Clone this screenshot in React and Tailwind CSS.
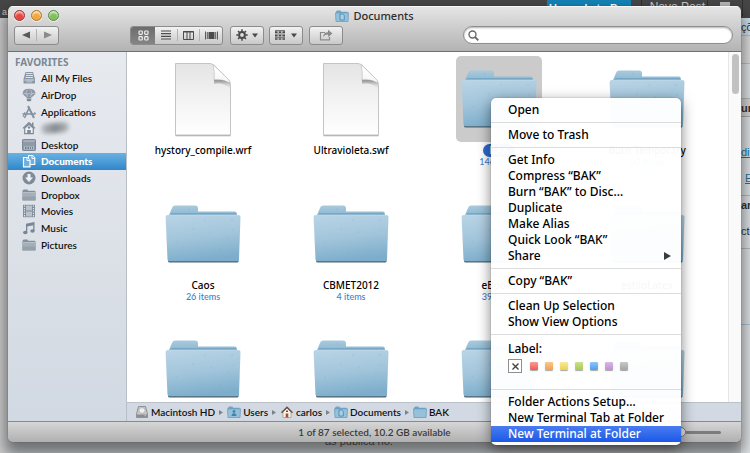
import React from "react";

const SANS = "font-['Noto_Sans','Open_Sans',sans-serif]";

function Folder({ id }) {
  return (
    <svg viewBox="0 0 76 58" className="h-[58px] w-[76px]" aria-hidden="true">
      <defs>
        <linearGradient id={`${id}-front`} x1="0.2" y1="0" x2="0.4" y2="1">
          <stop offset="0" stopColor="#b8d3e5" />
          <stop offset="0.5" stopColor="#a2c5db" />
          <stop offset="1" stopColor="#7cadcb" />
        </linearGradient>
        <linearGradient id={`${id}-back`} x1="0" y1="0" x2="0" y2="1">
          <stop offset="0" stopColor="#a9cadd" />
          <stop offset="1" stopColor="#82b1cd" />
        </linearGradient>
      </defs>
      <path d="M4 10 L7 3 Q7.500 0.500 10 0.500 H30 Q33 0.500 33 3.500 V6.500 H70 Q72 6.500 72 9 V14 H4 Z" fill={`url(#${id}-back)`} />
      <path d="M6 8.600 H71" stroke="#74a5c4" strokeWidth="1" />
      <path d="M3 55 H73.500 V56.500 Q73.500 57.500 72 57.500 H5 Q3 57.500 3 56 Z" fill="#4d6473" />
      <path d="M2.500 10 H73.500 Q75.600 10 75.500 12 L74 54.500 Q74 56.300 72 56.300 H4.500 Q2.600 56.300 2.500 54.500 L0.600 12.500 Q0.500 10 2.500 10 Z" fill={`url(#${id}-front)`} />
      <path d="M2 10.500 H74" stroke="#bdd7e7" strokeWidth="0.800" />
      <g fill="#6f9fbf" opacity="0.6">
        <circle cx="24" cy="4" r="0.500" /><circle cx="40" cy="15" r="0.500" /><circle cx="67" cy="15" r="0.600" />
        <circle cx="46" cy="27" r="0.500" /><circle cx="12" cy="37" r="0.500" /><circle cx="63" cy="33" r="0.500" />
        <circle cx="28" cy="24" r="0.500" /><circle cx="55" cy="45" r="0.500" /><circle cx="68" cy="25" r="0.500" />
        <circle cx="35" cy="48" r="0.500" />
      </g>
    </svg>
  );
}

function Page({ id }) {
  return (
    <svg viewBox="0 0 58 75" className="h-[75px] w-[58px]" aria-hidden="true">
      <defs>
        <linearGradient id={`${id}-sheet`} x1="0" y1="0" x2="0" y2="1">
          <stop offset="0" stopColor="#e4e4e4" />
          <stop offset="0.5" stopColor="#f3f3f3" />
          <stop offset="1" stopColor="#ffffff" />
        </linearGradient>
        <linearGradient id={`${id}-curl`} x1="0.500" y1="0.350" x2="0.300" y2="1">
          <stop offset="0" stopColor="#ffffff" />
          <stop offset="0.7" stopColor="#f6f6f6" />
          <stop offset="1" stopColor="#bdbdbd" />
        </linearGradient>
        <linearGradient id={`${id}-shade`} x1="0" y1="0" x2="0" y2="1">
          <stop offset="0" stopColor="#6f6f6f" />
          <stop offset="1" stopColor="#e0e0e0" stopOpacity="0" />
        </linearGradient>
      </defs>
      <path d="M1.500 73.500 H56.500" stroke="#a9a9a9" strokeWidth="1.500" />
      <path d="M1.500 1.500 H36 Q39 2 41 4 L54 17 Q56.500 19.500 56.500 24 V73 H1.500 Z" fill={`url(#${id}-sheet)`} stroke="#c4c4c4" />
      <path d="M40 17 Q49 16 56 21 V27 Q49 20 40 22 Z" fill={`url(#${id}-shade)`} />
      <path d="M39 2.500 L54 17 Q56 19 56 21 Q49 16.500 40 18 Q41 9 39 2.500 Z" fill={`url(#${id}-curl)`} stroke="#b0b0b0" strokeWidth="0.500" />
    </svg>
  );
}

const glyphs = {
  files: (
    <g>
      <path d="M3.500 1 H11 L13 8 V12.500 H1.500 V8 Z" fill="#8b97a4" />
      <path d="M4 2.500 H10.500 M4 4.500 H11 M3.500 6.500 H11" stroke="#e6ebf0" strokeWidth="0.900" />
      <path d="M2.500 9 H12" stroke="#e6ebf0" strokeWidth="0.900" />
      <path d="M4.500 10.800 H10" stroke="#d0d7de" strokeWidth="0.800" />
    </g>
  ),
  airdrop: (
    <g>
      <path d="M0.500 6 Q0.500 0.700 7 0.700 Q13.500 0.700 13.500 6 L9.500 9.500 H4.500 Z" fill="#8b97a4" />
      <path d="M1 6 Q3 4.500 4.500 6.300 Q7 4.500 9.500 6.300 Q11 4.500 13 6 M4.500 6.300 L6 9 M9.500 6.300 L8 9 M4 6 Q4 3 6 1.500 M10 6 Q10 3 8 1.500" stroke="#e2e7ed" strokeWidth="0.500" fill="none" />
      <rect x="4.800" y="9" width="4.400" height="4.300" rx="1" fill="#7d8995" />
      <path d="M5 10.500 H9" stroke="#d5dbe2" strokeWidth="0.600" />
    </g>
  ),
  apps: (
    <g stroke="#84909c" fill="none">
      <path d="M2.500 13 L7.500 2" strokeWidth="1.600" />
      <path d="M6 1 L12 13" strokeWidth="2" />
      <path d="M0.500 9 H13.500" strokeWidth="1.500" />
      <path d="M1 12 L3 7 M12.500 7 L13.500 9" strokeWidth="1" />
    </g>
  ),
  home: (
    <g>
      <path d="M7 0.800 L0.500 7 L1.500 7.800 L7 2.800 L12.500 7.800 L13.500 7 L11.500 5 V1.500 H10 V3.500 Z" fill="#7e8a97" />
      <path d="M2.700 7 V12.700 H11.300 V7 L7 3.200 Z" fill="#eef1f4" stroke="#7e8a97" strokeWidth="1.200" />
      <path d="M5.200 13 V9 H8.800 V13 Z" fill="#7e8a97" />
      <circle cx="7" cy="6.500" r="1.200" fill="#7e8a97" />
    </g>
  ),
  desktop: (
    <g>
      <rect x="0.500" y="1.500" width="13" height="11" rx="0.800" fill="#8e9aa7" stroke="#7d8995" />
      <path d="M1.500 3 H12.500" stroke="#bcc5ce" />
      <rect x="2" y="8.500" width="10" height="3" fill="#b6c0ca" />
      <path d="M3 10 H4.500 M5.500 10 H7 M8 10 H9 M10 10 H11" stroke="#5f6c79" strokeWidth="1.500" />
    </g>
  ),
  documents: (
    <g stroke="#ffffff" fill="#6bb0e0">
      <path d="M6.500 1.500 H10.500 L12.800 4 V10.500 H6.500 Z" strokeWidth="1.100" />
      <path d="M10 1.500 V4.500 H13" strokeWidth="0.900" />
      <path d="M1.500 3.500 H5 L8 6.500 V12.800 H1.500 Z" strokeWidth="1.200" />
      <path d="M5 3.500 V6.500 H8" strokeWidth="0.900" />
    </g>
  ),
  downloads: (
    <g>
      <circle cx="7" cy="7" r="6.500" fill="#7f8b98" />
      <path d="M5.500 3 H8.500 V6.500 H11 L7 11 L3 6.500 H5.500 Z" fill="#eef1f4" />
    </g>
  ),
  folder: (
    <g>
      <path d="M0.500 3 Q0.500 1.500 2 1.500 H5 Q6 1.500 6 2.700 H12.500 Q13.500 2.700 13.500 4 V12 H0.500 Z" fill="#84909c" />
      <path d="M0.500 4.500 H13.500 V12.500 H0.500 Z" fill="#a5afb9" />
      <path d="M0.500 8.500 H13.500 V12.500 H0.500 Z" fill="#96a1ac" />
      <path d="M1 4.500 H13" stroke="#c4cbd2" strokeWidth="0.700" />
    </g>
  ),
  movies: (
    <g>
      <rect x="1" y="0.800" width="12" height="12.400" fill="#7f8b98" />
      <rect x="4" y="1.500" width="6" height="5" fill="#b9c2cb" />
      <rect x="4" y="7.500" width="6" height="5" fill="#b9c2cb" />
      <path d="M2.500 1.500 V13 M11.500 1.500 V13" stroke="#e4e9ee" strokeWidth="1.200" strokeDasharray="1.300 1.100" />
    </g>
  ),
  music: (
    <g fill="#7a8693">
      <path d="M4 2.800 L12.500 1 V10 H11.200 V4.200 L5.300 5.400 V11.500 H4 Z" />
      <ellipse cx="3.300" cy="11.500" rx="2.200" ry="1.700" />
      <ellipse cx="10.500" cy="10" rx="2.200" ry="1.700" />
    </g>
  ),
};

function SideGlyph({ name }) {
  return (
    <svg viewBox="0 0 14 14" className="h-3.5 w-3.5 shrink-0" aria-hidden="true">
      {glyphs[name]}
    </svg>
  );
}

const places = [
  { icon: "files", label: "All My Files" },
  { icon: "airdrop", label: "AirDrop" },
  { icon: "apps", label: "Applications" },
  { icon: "home", label: "" },
  { icon: "desktop", label: "Desktop" },
  { icon: "documents", label: "Documents", current: true },
  { icon: "downloads", label: "Downloads" },
  { icon: "folder", label: "Dropbox" },
  { icon: "movies", label: "Movies" },
  { icon: "music", label: "Music" },
  { icon: "folder", label: "Pictures" },
];

function Sidebar() {
  return (
    <nav className="w-[119px] shrink-0 border-r border-[#b9bec4] bg-linear-to-b from-[#e7ebf0] via-[#dde1e8] to-[#d1d9e2] pt-[3px]">
      <h2 className="pl-[7px] text-[10px] leading-[15px] font-bold text-[#7b8794]">FAVORITES</h2>
      <ul className="grid h-[183px] auto-rows-fr font-['Lato','Noto_Sans',sans-serif]">
        {places.map((p, i) => (
          <li key={i} className="min-h-0">
            <a
              href="#place"
              aria-label={p.label || "Home"}
              className={
                p.current
                  ? "flex h-full items-center gap-[5px] bg-linear-to-b from-[#68b2e2] to-[#2f86c9] pl-3.5 text-[10px] leading-none font-black text-white"
                  : "flex h-full items-center gap-[5px] pl-3.5 text-[10px] leading-none font-semibold text-[#111111]"
              }
            >
              <SideGlyph name={p.icon} />
              {p.label || <span className="h-2.5 w-7 -rotate-6 rounded-full bg-linear-to-r from-[#b9bec3] via-[#858a8e] to-[#b4b9be] blur-[2px]" />}
            </a>
          </li>
        ))}
      </ul>
    </nav>
  );
}

const BTN =
  "flex h-[19px] items-center justify-center rounded-[3px] border border-[#8c8c8c] bg-linear-to-b from-[#f2f2f2] to-[#c9c9c9]";

function Caret() {
  return (
    <svg viewBox="0 0 6 5" className="h-[5px] w-1.5" aria-hidden="true">
      <path d="M0 0.500 H6 L3 4.500 Z" fill="#4a4a4a" />
    </svg>
  );
}

function Toolbar() {
  return (
    <div className="flex h-5 items-center pr-2 pl-1.5">
      <div className={`${BTN} w-[45px]`}>
        <button aria-label="Back" className="flex h-full flex-1 items-center justify-center">
          <svg viewBox="0 0 8 8" className="h-2 w-2"><path d="M8 0.500 V7.500 L0 4 Z" fill="#5a5a5a" /></svg>
        </button>
        <span className="h-3 w-px bg-[#b3b3b3]" />
        <button aria-label="Forward" className="flex h-full flex-1 items-center justify-center">
          <svg viewBox="0 0 8 8" className="h-2 w-2"><path d="M0 0.500 V7.500 L8 4 Z" fill="#8b8b8b" /></svg>
        </button>
      </div>
      <div className={`${BTN} ml-[71px] w-[93px] overflow-hidden`}>
        <button aria-label="Icon view" aria-pressed="true" className="flex h-full w-6 items-center justify-center bg-linear-to-b from-[#6d6d6d] to-[#858585]">
          <svg viewBox="0 0 11 11" className="h-[11px] w-[11px]" fill="none" stroke="#f0f0f0" strokeWidth="1.200">
            <rect x="1" y="1" width="3.300" height="3.300" rx="0.800" /><rect x="6.700" y="1" width="3.300" height="3.300" rx="0.800" />
            <rect x="1" y="6.700" width="3.300" height="3.300" rx="0.800" /><rect x="6.700" y="6.700" width="3.300" height="3.300" rx="0.800" />
          </svg>
        </button>
        <button aria-label="List view" className="flex h-full flex-1 items-center justify-center">
          <svg viewBox="0 0 10 10" className="h-2.5 w-2.5"><path d="M0 1 H10 M0 3.700 H10 M0 6.400 H10 M0 9 H10" stroke="#4c4c4c" strokeWidth="1.200" /></svg>
        </button>
        <span className="h-3 w-px bg-[#b3b3b3]" />
        <button aria-label="Column view" className="flex h-full flex-1 items-center justify-center">
          <svg viewBox="0 0 11 9" className="h-[9px] w-[11px]"><path d="M0.500 0.500 H10.500 V8.500 H0.500 Z M4 1 V8 M7 1 V8 M0 1 H11" fill="none" stroke="#4c4c4c" /></svg>
        </button>
        <span className="h-3 w-px bg-[#b3b3b3]" />
        <button aria-label="Cover Flow view" className="flex h-full flex-1 items-center justify-center">
          <svg viewBox="0 0 13 9" className="h-[9px] w-[13px]">
            <rect x="3.500" y="1" width="6" height="7" fill="#4c4c4c" />
            <path d="M0.500 0.500 V8.500 M2.300 1 V8 M10.700 1 V8 M12.500 0.500 V8.500" stroke="#4c4c4c" strokeWidth="0.900" />
          </svg>
        </button>
      </div>
      <button aria-label="Actions" className={`${BTN} ml-[7px] w-[34px] gap-1`}>
        <svg viewBox="0 0 12 12" className="h-3 w-3">
          <circle cx="6" cy="6" r="2.900" fill="none" stroke="#4a4a4a" strokeWidth="2" />
          <path d="M6 0.300 V2.500 M6 9.500 V11.700 M0.300 6 H2.500 M9.500 6 H11.700 M2 2 L3.500 3.500 M8.500 8.500 L10 10 M10 2 L8.500 3.500 M3.500 8.500 L2 10" stroke="#4a4a4a" strokeWidth="1.500" />
        </svg>
        <Caret />
      </button>
      <button aria-label="Arrange" className={`${BTN} ml-[5px] w-[34px] gap-1.5`}>
        <svg viewBox="0 0 10 10" className="h-2.5 w-2.5" stroke="#4a4a4a">
          <path d="M0 0.500 H10 M0 4 H10 M0 7.400 H10" strokeWidth="0.700" />
          <path d="M0 2.200 H10 M0 5.600 H10 M0 9 H10" strokeWidth="1.700" strokeDasharray="2.600 1.100" />
        </svg>
        <Caret />
      </button>
      <button aria-label="Share" className={`${BTN} ml-1.5 w-[34px]`}>
        <svg viewBox="0 0 14 12" className="h-3 w-3.5" fill="none">
          <path d="M6 3.500 H1.500 V10.800 H10.500 V8" stroke="#8b8b8b" strokeWidth="1.200" />
          <path d="M4 8 Q4.500 3.300 9 3.300 V0.800 L13.500 4.500 L9 8 V5.600 Q6 5.500 4 8 Z" fill="#8b8b8b" />
        </svg>
      </button>
      <label className="ml-auto flex h-[18px] w-[270px] items-center rounded-full border border-[#8e8e8e] bg-white pl-1 shadow-[inset_0_1px_2px_rgba(0,0,0,0.3)]">
        <svg viewBox="0 0 11 11" className="h-[11px] w-[11px] shrink-0" fill="none" stroke="#6a6a6a">
          <circle cx="4.500" cy="4.500" r="3.500" strokeWidth="1.400" />
          <path d="M7 7 L10.300 10.300" strokeWidth="1.900" />
        </svg>
        <input type="search" aria-label="Search" className="min-w-0 flex-1 bg-transparent px-1 text-[11px] outline-none" />
      </label>
    </div>
  );
}

function MiniFolder({ mark }) {
  return (
    <svg viewBox="0 0 14 12" className="h-3 w-3.5 shrink-0" aria-hidden="true">
      <path d="M1 2 Q1 0.500 2.500 0.500 H5 Q6 0.500 6 1.800 H12.500 V4 H1 Z" fill="#6fa5c6" />
      <path d="M0.500 2.800 H13.500 L13 11.500 H1 Z" fill="#96c1da" stroke="#5f98bb" strokeWidth="0.700" />
      {mark === "doc" && <path d="M5 4 H7.800 L9.300 5.500 V10 H5 Z" fill="#a9cfe5" stroke="#4783a8" strokeWidth="0.800" />}
      {mark === "users" && (
        <g fill="#4783a8">
          <circle cx="7" cy="5.500" r="1.400" />
          <path d="M4.500 10 Q4.500 7.300 7 7.300 Q9.500 7.300 9.500 10 Z" />
        </g>
      )}
    </svg>
  );
}

function Light({ tone }) {
  return (
    <button
      aria-label={tone.name}
      className={`h-[11px] w-[11px] rounded-full border shadow-[inset_0_2px_2px_rgba(255,255,255,0.7),0_1px_0_rgba(255,255,255,0.5)] ${tone.style}`}
    />
  );
}

const lights = [
  { name: "Close", style: "border-[#9b3b36] bg-[#e9453f]" },
  { name: "Minimize", style: "border-[#a9772f] bg-[#f0a83e]" },
  { name: "Zoom", style: "border-[#5d8b48] bg-[#80bf5c]" },
];

const items = [
  { kind: "page", name: "hystory_compile.wrf" },
  { kind: "page", name: "Ultravioleta.swf" },
  { kind: "folder", name: "BAK", count: "146 items", selected: true },
  { kind: "folder", name: "Burn Temporary", count: "60 items" },
  { kind: "folder", name: "Caos", count: "26 items" },
  { kind: "folder", name: "CBMET2012", count: "4 items" },
  { kind: "folder", name: "eBooks", count: "39 items" },
  { kind: "folder", name: "estiloLatex" },
  { kind: "folder", name: "" },
  { kind: "folder", name: "" },
  { kind: "folder", name: "" },
  { kind: "folder", name: "" },
];

function Files() {
  return (
    <div className="flex min-h-0 flex-1 overflow-hidden bg-white">
      <div className="grid flex-1 auto-rows-[135px] grid-cols-4 pt-1 pr-[7px] pl-0.5">
        {items.map((it, i) => (
          <figure key={i} className="flex flex-col items-center">
            <div className={`flex h-[86px] w-[86px] items-center justify-center rounded-[5px] ${it.selected ? "bg-[#cbcbcb]" : ""}`}>
              {it.kind === "page" ? <Page id={`p${i}`} /> : <Folder id={`f${i}`} />}
            </div>
            <figcaption className="flex flex-col items-center pt-0.5 text-[10px] leading-[13px] font-medium text-black">
              <span className={it.selected ? "rounded-full bg-[#2f68d2] px-1.5 text-white" : ""}>{it.name}</span>
              {it.count && (
                <span className="font-['Lato','Noto_Sans',sans-serif] text-[9px] leading-[10px] text-[#3f7fc9]">{it.count}</span>
              )}
            </figcaption>
          </figure>
        ))}
      </div>
      <div className="w-[13px] border-l border-[#e6e6e6] bg-[#fafafa] pt-0.5">
        <div className="mx-auto h-10 w-[7px] rounded-full bg-[#c1c1c1]" />
      </div>
    </div>
  );
}

function Crumb({ icon, label, last }) {
  return (
    <li className="flex items-center">
      {icon}
      <a href="#crumb" className="ml-0.5">{label}</a>
      {!last && (
        <svg viewBox="0 0 4 5" className="mx-1 h-[5px] w-1" aria-hidden="true"><path d="M0 0 V5 L4 2.500 Z" fill="#7d838a" /></svg>
      )}
    </li>
  );
}

function PathBar() {
  return (
    <ol className="flex h-[19px] shrink-0 items-center border-t border-[#bcc2c9] bg-[#d2d9e2] pl-2 font-['Lato','Noto_Sans',sans-serif] text-[10px] leading-none font-semibold text-[#111111]">
      <Crumb
        label="Macintosh HD"
        icon={
          <svg viewBox="0 0 14 12" className="h-3 w-3.5" aria-hidden="true">
            <path d="M3.500 0.500 H10.500 L12.500 8 V11.500 H1.500 V8 Z" fill="#c9c9c9" stroke="#777777" strokeWidth="0.700" />
            <ellipse cx="7" cy="4.500" rx="3" ry="2.800" fill="#efefef" stroke="#a5a5a5" strokeWidth="0.600" />
            <rect x="2" y="8.500" width="10" height="2.500" fill="#8c8c8c" />
            <path d="M9.500 9.700 H11" stroke="#d8d070" />
          </svg>
        }
      />
      <Crumb label="Users" icon={<MiniFolder mark="users" />} />
      <Crumb
        label="carlos"
        icon={
          <svg viewBox="0 0 14 12" className="h-3 w-3.5" aria-hidden="true">
            <path d="M3 6 V11.500 H11 V6 L7 2 Z" fill="#f5f2ea" stroke="#8d877b" strokeWidth="0.600" />
            <path d="M1.500 6.800 L7 1.200 L12.500 6.800" fill="none" stroke="#6b5245" strokeWidth="1.500" />
            <rect x="5.700" y="7.500" width="2.600" height="4" fill="#b04a2c" />
            <rect x="6" y="4.500" width="2" height="1.500" fill="#7d4a35" />
          </svg>
        }
      />
      <Crumb label="Documents" icon={<MiniFolder mark="doc" />} />
      <Crumb label="BAK" last icon={<MiniFolder />} />
    </ol>
  );
}

const swatches = [
  { name: "Red", style: "from-[#f89a94] to-[#ee5a54]" },
  { name: "Orange", style: "from-[#fac68c] to-[#f2a04c]" },
  { name: "Yellow", style: "from-[#f7ea94] to-[#ead24c]" },
  { name: "Green", style: "from-[#cbe08c] to-[#a9cb50]" },
  { name: "Blue", style: "from-[#8cc6f8] to-[#4c9fee]" },
  { name: "Purple", style: "from-[#dab8e6] to-[#c08ed4]" },
  { name: "Gray", style: "from-[#c8c8c8] to-[#a4a4a4]" },
];

const menuGroups = [
  ["Open"],
  ["Move to Trash"],
  ["Get Info", "Compress “BAK”", "Burn “BAK” to Disc…", "Duplicate", "Make Alias", "Quick Look “BAK”", "Share"],
  ["Copy “BAK”"],
  ["Clean Up Selection", "Show View Options"],
];

function MenuItem({ label, active }) {
  return (
    <button
      role="menuitem"
      className={
        active
          ? "flex h-4 w-full items-center justify-between bg-linear-to-b from-[#4a7cf0] to-[#1a58e8] pr-2.5 pl-[17px] text-white"
          : "flex h-4 w-full items-center justify-between pr-2.5 pl-[17px]"
      }
    >
      {label}
      {label === "Share" && (
        <svg viewBox="0 0 7 8" className="h-2 w-[7px]" aria-hidden="true"><path d="M0 0 V8 L7 4 Z" fill="#3c3c3c" /></svg>
      )}
    </button>
  );
}

function Rule() {
  return <hr className="my-1 border-t border-[#dcdcdc]" />;
}

function ContextMenu() {
  return (
    <div
      role="menu"
      className="absolute top-[98px] left-[491px] w-[190px] rounded-[5px] bg-white/97 pt-1 pb-[3px] text-[12px] leading-4 font-medium text-black shadow-[0_4px_14px_rgba(0,0,0,0.5),0_0_1px_rgba(0,0,0,0.5)]"
    >
      {menuGroups.map((group, i) => (
        <React.Fragment key={i}>
          {group.map((label) => (
            <MenuItem key={label} label={label} />
          ))}
          <Rule />
        </React.Fragment>
      ))}
      <div className="pt-0.5 pl-[17px]">Label:</div>
      <div className="flex items-center gap-2 pt-0.5 pb-3 pl-[17px]">
        <button aria-label="No label" className="flex h-3.5 w-3.5 items-center justify-center border border-[#8f8f8f] bg-white">
          <svg viewBox="0 0 7 7" className="h-[7px] w-[7px]"><path d="M0.500 0.500 L6.500 6.500 M6.500 0.500 L0.500 6.500" stroke="#444444" strokeWidth="1.400" /></svg>
        </button>
        <div className="flex gap-[7px]">
          {swatches.map((s) => (
            <button key={s.name} aria-label={s.name} className={`h-2 w-2 rounded-[1px] bg-linear-to-b shadow-[0_1px_1px_rgba(0,0,0,0.35)] ${s.style}`} />
          ))}
        </div>
      </div>
      <Rule />
      <MenuItem label="Folder Actions Setup…" />
      <MenuItem label="New Terminal Tab at Folder" />
      <MenuItem label="New Terminal at Folder" active />
    </div>
  );
}

function Backdrop() {
  return (
    <div className="absolute inset-0 flex flex-col overflow-hidden bg-[#c9cdd0] font-['Liberation_Sans',Arial,sans-serif]" aria-hidden="true">
      <div className="flex h-[18px] shrink-0 items-start justify-end bg-[#464646] pr-[7px] text-[11px] leading-3 text-[#c8c8c8]">
        <span className="mr-auto ml-0.5 pt-1.5 text-[9px]">a.</span>
        <span className="h-4 w-[84px] bg-[#1483b5] pt-0.5 text-center font-bold text-white">Upgrade to Pro</span>
        <span className="mr-0.5 ml-2.5 h-4 border-l border-[#303030] pt-px pl-2 text-[12px]">Novo Post</span>
        <span className="h-4 border-x border-[#303030] px-3 pt-0.5"><i className="block h-3 w-[10px] bg-[#b5b5b5]" /></span>
      </div>
      <div className="flex flex-1">
        <div className="w-2 bg-[#cccccc]" />
        <div className="flex flex-1 items-end pb-0.5 pl-[317px] text-[11px] leading-[19px] text-[#555555]">as publica no.</div>
        <div className="flex w-[9px] flex-col overflow-hidden bg-[#dfe3e6] text-[11px] leading-[18px] text-[#333333]">
          <div className="h-[18px] shrink-0 border-b border-[#a9c4d6] bg-[#cfe1ec]">çõ</div>
          <div className="h-7 shrink-0 border-b border-[#b5c2cb] bg-[#dddddd]" />
          <div className="h-[35px] shrink-0 border-b border-[#b9b9b9]" />
          <div className="h-[18px] shrink-0 border-b border-[#a8a8a8] bg-[#d5d5d5] font-bold">um</div>
          <div className="h-[26px] shrink-0" />
          <div className="h-[26px] shrink-0 text-[#21759b] underline">dit</div>
          <div className="h-[26px] shrink-0 pl-1 text-[#21759b] underline">E</div>
          <div className="h-[27px] shrink-0 border-t border-[#b9b9b9] font-bold">am</div>
          <div className="h-[27px] shrink-0 border-b border-[#b9b9b9]">cte</div>
          <div className="h-[76px] shrink-0 border-b border-[#a9c4d6]" />
          <div className="flex-1" />
        </div>
      </div>
    </div>
  );
}

export default function App() {
  return (
    <div className={`relative flex h-screen flex-col overflow-hidden pt-1.5 pr-[9px] pb-[11px] pl-2 ${SANS}`}>
      <Backdrop />
      <main className="relative flex min-h-0 flex-1 flex-col overflow-hidden rounded-[5px] shadow-[0_9px_14px_3px_rgba(0,0,0,0.45),0_0_1px_rgba(0,0,0,0.7)]">
        <header className="h-[46px] shrink-0 border-b border-[#6f6f6f] bg-linear-to-b from-[#e6e6e6] to-[#b3b3b3] shadow-[inset_0_1px_0_rgba(255,255,255,0.7)]">
          <div className="flex h-[19px] items-center px-1.5">
            <div className="flex flex-1 gap-1.5">
              {lights.map((l) => (
                <Light key={l.name} tone={l} />
              ))}
            </div>
            <h1 className="flex items-center gap-1 text-[11px] leading-none font-medium text-[#2d2d2d]">
              <MiniFolder mark="doc" />
              Documents
            </h1>
            <div className="flex-1" />
          </div>
          <Toolbar />
        </header>
        <div className="flex min-h-0 flex-1">
          <Sidebar />
          <div className="flex min-w-0 flex-1 flex-col">
            <Files />
            <PathBar />
          </div>
        </div>
        <footer className="grid h-[21px] shrink-0 grid-cols-[1fr_auto_1fr] items-center border-t border-[#8a8a8a] bg-linear-to-b from-[#d6d6d6] to-[#b0b0b0] font-['Lato','Noto_Sans',sans-serif] text-[10px] leading-none font-semibold text-[#3b3b3b]">
          <span />
          <span>1 of 87 selected, 10.2 GB available</span>
          <input
            type="range"
            aria-label="Icon size"
            defaultValue="50"
            className="mr-5 h-[3px] w-20 appearance-none justify-self-end rounded-full bg-[#7c7c7c] [&::-webkit-slider-thumb]:h-2.5 [&::-webkit-slider-thumb]:w-2.5 [&::-webkit-slider-thumb]:appearance-none [&::-webkit-slider-thumb]:rounded-full [&::-webkit-slider-thumb]:border [&::-webkit-slider-thumb]:border-[#7c7c7c] [&::-webkit-slider-thumb]:bg-[#e8e8e8]"
          />
        </footer>
      </main>
      <ContextMenu />
    </div>
  );
}
